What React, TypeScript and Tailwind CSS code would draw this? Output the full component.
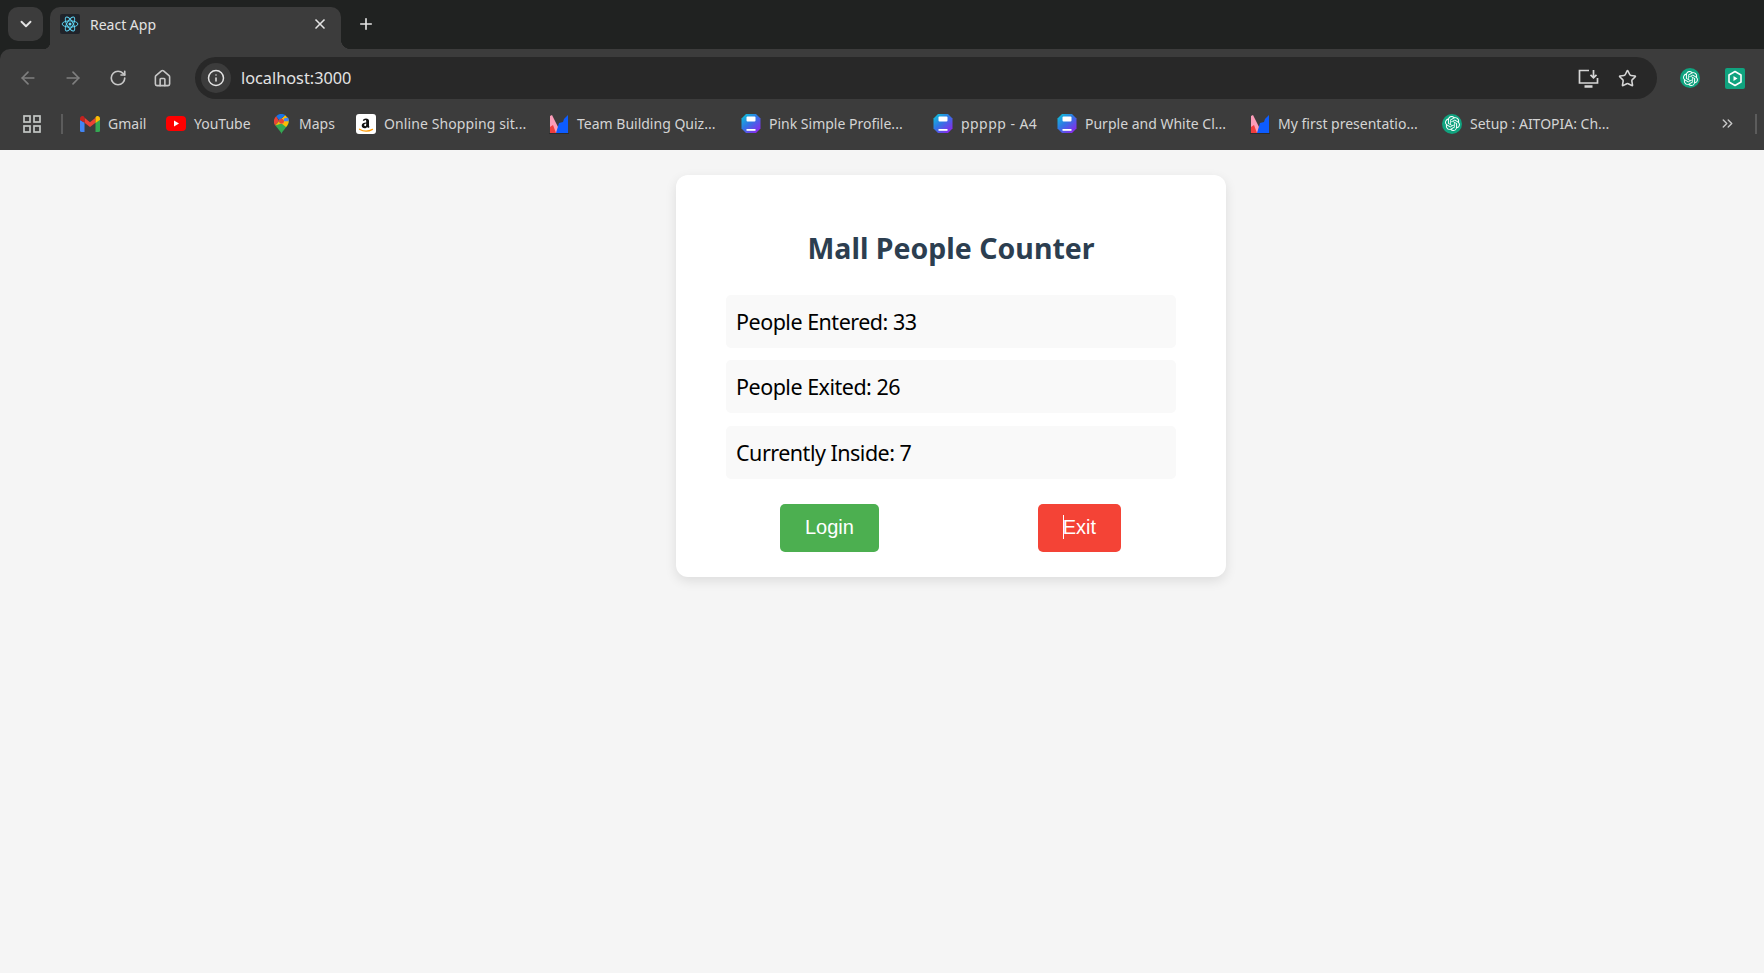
import { ArrowLeft, ArrowRight, ChevronDown, ChevronsRight, House, Info, Plus, RotateCw, Star, X } from "lucide-react";
import type { ReactNode } from "react";
import { SiOpenai } from "react-icons/si";

function ReactIcon() {
  return (
    <div className="flex h-5 w-5 items-center justify-center rounded-[2px] bg-[#20232a]">
      <svg width="18" height="18" viewBox="-12 -12 24 24" fill="none" stroke="#61dafb" strokeWidth="1.2">
        <circle r="2" fill="#61dafb" stroke="none" />
        <ellipse rx="10.5" ry="4.2" />
        <ellipse rx="10.5" ry="4.2" transform="rotate(60)" />
        <ellipse rx="10.5" ry="4.2" transform="rotate(120)" />
      </svg>
    </div>
  );
}

function GmailIcon() {
  return (
    <svg width="20" height="16" viewBox="0 0 20 16" fill="none">
      <path d="M0 4v10.5A1.5 1.5 0 0 0 1.5 16H4.500V6.500z" fill="#4285f4" />
      <path d="M15.500 6.500V16h3A1.500 1.500 0 0 0 20 14.500V4z" fill="#34a853" />
      <path d="M4.500 1.800 10 6.200l5.500-4.400v5L10 11 4.500 6.800z" fill="#ea4335" />
      <path d="M0 4V2.500C0 .6 2.200-.6 3.800.6l.7.6v5.600z" fill="#c5221f" />
      <path d="M15.500 1.200l.7-.6C17.800-.6 20 .6 20 2.500V4l-4.500 3z" fill="#fbbc04" />
    </svg>
  );
}

function YoutubeIcon() {
  return (
    <svg width="20" height="15" viewBox="0 0 20 15">
      <rect width="20" height="15" rx="4" fill="#ff0000" />
      <path d="M8 4.500v6l5-3z" fill="#fff" />
    </svg>
  );
}

function MapsIcon() {
  return (
    <svg width="15" height="20" viewBox="0 0 15 20">
      <path d="M7.500 20C6.800 16.500 0 12 0 7.300h15C15 12 8.200 16.500 7.500 20z" fill="#34a853" />
      <path d="M1.200 11.500 11 1 14.300 4.500C15.500 7.500 14 11 12 13L7.500 9.500z" fill="#fbbc04" />
      <path d="M11.500 1.200A7.500 7.500 0 0 0 2.200 2.300L5 6z" fill="#1a73e8" />
      <path d="M2.200 2.300A7.400 7.400 0 0 0 1.200 11.500L5 7z" fill="#ea4335" />
      <path d="M10 4.500 14 3.400A7.400 7.400 0 0 1 14.800 7.300H10z" fill="#4285f4" />
      <circle cx="7.500" cy="7.300" r="2.700" fill="#fff" fillOpacity="0.25" />
      <circle cx="7.500" cy="7.300" r="2.500" fill="#ea4335" />
    </svg>
  );
}

function AmazonIcon() {
  return (
    <svg width="20" height="20" viewBox="0 0 20 20" fill="none">
      <rect width="20" height="20" rx="3" fill="#fff" />
      <path d="M6.800 6.500c.3-1.300 1.500-2 3.200-2 2 0 3 .9 3 2.600v4.700c0 .5.200.8.600 1.100l-1.400 1.200c-.5-.4-.8-.8-1-1.200-.7.900-1.500 1.300-2.600 1.300-1.700 0-2.900-1-2.900-2.700 0-2.200 2-3 4.500-3.100V7.200c0-.8-.4-1.200-1-1.200-.5 0-.9.300-1 .9zm3.400 3.100c-1.400.1-2 .7-2 1.500 0 .7.400 1.100 1 1.100 .8 0 1-.8 1-2z" fill="#111" />
      <path d="M3.500 15.200c4 2.400 9 2.400 13 .2" stroke="#f90" strokeWidth="1.300" strokeLinecap="round" />
    </svg>
  );
}

function SlidesIcon() {
  return (
    <svg width="20" height="20" viewBox="0 0 20 20">
      <path d="M0 20h20v-.500H0z" fill="#1a1a1a" />
      <path d="M1 19V2l2-1 6 12v6z" fill="#fb9cb8" />
      <path d="M1 19v-6l3-2 3 8z" fill="#f03d3d" />
      <path d="M7 19l3-10 4-1 1-3 4-4v18z" fill="#0d5cff" />
    </svg>
  );
}

function GammaIcon() {
  return (
    <svg width="21" height="21" viewBox="0 0 20 20">
      <defs>
        <linearGradient id="gamma" x1="0" y1="0.100" x2="0.800" y2="1">
          <stop offset="0" stopColor="#0fc0d8" />
          <stop offset="0.450" stopColor="#2f78e4" />
          <stop offset="1" stopColor="#8a28ec" />
        </linearGradient>
      </defs>
      <path d="M5 .5h10L19.500 5v10L15 19.500H5L.5 15V5z" fill="url(#gamma)" />
      <rect x="5.500" y="3" width="9" height="5" rx="1" fill="#fff" />
      <rect x="5.500" y="15.500" width="9" height="1.800" fill="#fff" />
    </svg>
  );
}

function KnotIcon() {
  return (
    <div className="flex h-5 w-5 items-center justify-center rounded-full bg-[#10a37f]">
      <SiOpenai size={15} color="#fff" />
    </div>
  );
}

function HexPlayIcon() {
  return (
    <svg width="20" height="21" viewBox="0 0 20 21" fill="none">
      <rect width="20" height="21" rx="2" fill="#10a37f" />
      <path d="M10 3.500 16 7v7l-6 3.500L4 14V7z" stroke="#fff" strokeWidth="1.600" strokeLinejoin="round" />
      <path d="M8.500 8l4 2.500-4 2.500z" fill="#fff" />
    </svg>
  );
}

function InstallIcon() {
  return (
    <svg width="21" height="19" viewBox="0 0 21 19" fill="none" stroke="#d6d6d6" strokeWidth="1.700">
      <path d="M11 1.500H1.500v12.500h18V9" />
      <path d="M6.500 17.500h8" strokeWidth="2.500" />
      <path d="M15.500 1v7.500M12.500 5.800l3 3 3-3" />
    </svg>
  );
}

function AppsIcon() {
  return (
    <svg width="18" height="18" viewBox="0 0 18 18" fill="none" stroke="#c4c7c5" strokeWidth="1.700">
      <rect x="1" y="1" width="6" height="6" />
      <rect x="11" y="1" width="6" height="6" />
      <rect x="1" y="11" width="6" height="6" />
      <rect x="11" y="11" width="6" height="6" />
    </svg>
  );
}

const bookmarks: { label: string; icon: ReactNode; left: string; width: string; spacing?: string }[] = [
  { label: "Gmail", icon: <GmailIcon />, left: "ml-[17px]", width: "w-[65px]" },
  { label: "YouTube", icon: <YoutubeIcon />, left: "ml-[21px]", width: "w-[85px]" },
  { label: "Maps", icon: <MapsIcon />, left: "ml-[20px]", width: "w-[61px]" },
  { label: "Online Shopping sit...", icon: <AmazonIcon />, left: "ml-[24px]", width: "w-[170px]", spacing: "tracking-[0.1px]" },
  { label: "Team Building Quiz...", icon: <SlidesIcon />, left: "ml-[23px]", width: "w-[165px]" },
  { label: "Pink Simple Profile...", icon: <GammaIcon />, left: "ml-[27px]", width: "w-[163px]" },
  { label: "ppppp - A4", icon: <GammaIcon />, left: "ml-[29px]", width: "w-[103px]", spacing: "tracking-[0.45px]" },
  { label: "Purple and White Cl...", icon: <GammaIcon />, left: "ml-[21px]", width: "w-[170px]" },
  { label: "My first presentatio...", icon: <SlidesIcon />, left: "ml-[23px]", width: "w-[167px]" },
  { label: "Setup : AITOPIA: Ch...", icon: <KnotIcon />, left: "ml-[25px]", width: "w-[166px]" },
];

const row = "h-[53px] rounded-[5px] bg-[#f9f9f9] px-[10px] text-[21.5px] leading-[53px] tracking-[-0.5px] text-black";

export default function App() {
  return (
    <div className="flex h-[973px] flex-col overflow-hidden bg-[#f5f5f5] font-['Noto_Sans',sans-serif]">
      <div className="shrink-0 bg-[#202221]">
        {/* tab strip */}
        <div className="flex h-[49px] items-end pl-2">
          <div className="mb-[8px] flex h-[34px] w-[35px] items-center justify-center rounded-[10px] bg-[#3c3c3c]">
            <ChevronDown size={18} strokeWidth={2.5} className="text-[#e3e3e3]" />
          </div>
          <div className="h-[7px] w-[7px] bg-[radial-gradient(circle_at_0_0,#202221_7px,#3c3c3c_7.5px)]" />
          <div className="flex h-[42px] w-[291px] items-center rounded-t-[10px] bg-[#3c3c3c] pb-[8px] pl-[10px] pr-[13px]">
            <ReactIcon />
            <span className="ml-[10px] flex-1 text-[14px] text-[#e3e3e3]">React App</span>
            <X size={16} strokeWidth={2.5} className="text-[#e3e3e3]" />
          </div>
          <div className="h-[10px] w-[10px] bg-[radial-gradient(circle_at_100%_0,#202221_10px,#3c3c3c_10.5px)]" />
          <Plus size={18} strokeWidth={2.2} className="mb-[16px] ml-[6px] text-[#e3e3e3]" />
        </div>

        {/* toolbar */}
        <div className="flex h-[51px] items-center rounded-tl-[10px] bg-[#3c3c3c] pl-[18px] pt-[7px]">
          <ArrowLeft size={20} className="text-[#7f7f7f]" />
          <ArrowRight size={20} className="ml-[25px] text-[#7f7f7f]" />
          <RotateCw size={18} strokeWidth={2.2} className="ml-[26px] text-[#c7c7c7]" />
          <House size={19} className="ml-[26px] text-[#c7c7c7]" />
          <div className="ml-[23px] flex h-[42px] w-[1462px] items-center rounded-full bg-[#282828] pl-[6px] pr-[20px]">
            <div className="flex h-[30px] w-[30px] items-center justify-center rounded-full bg-[#3c3c3c]">
              <Info size={18} className="text-[#e3e3e3]" />
            </div>
            <span className="ml-[10px] flex-1 text-[16.3px] text-[#e3e3e3]">localhost:3000</span>
            <InstallIcon />
            <Star size={19} strokeWidth={2} className="ml-[19px] text-[#d6d6d6]" />
          </div>
          <div className="ml-[23px]">
            <KnotIcon />
          </div>
          <div className="ml-[25px]">
            <HexPlayIcon />
          </div>
        </div>
      </div>

      {/* bookmarks bar */}
      <div className="flex h-[50px] shrink-0 items-center bg-[#3c3c3c] pb-[3px] pl-[23px]">
        <AppsIcon />
        <div className="ml-[20px] h-5 w-[2px] bg-[#5c5c5c]" />
        {bookmarks.map((b, i) => (
          <div key={i} className={`flex shrink-0 items-center gap-2 ${b.left} ${b.width}`}>
            <div className="flex w-5 shrink-0 justify-center">{b.icon}</div>
            <span className={`whitespace-nowrap text-[14px] text-[#d4d4d4] ${b.spacing ?? ""}`}>{b.label}</span>
          </div>
        ))}
        <ChevronsRight size={17} className="ml-[111px] text-[#c7c7c7]" />
        <div className="ml-[19px] h-5 w-[2px] bg-[#5c5c5c]" />
      </div>

      {/* page */}
      <div className="flex flex-1 pl-[676px] pt-[25px]">
        <div className="h-[402px] w-[550px] rounded-[12px] bg-white px-[50px] pt-[54px] shadow-[0_4px_12px_rgba(0,0,0,0.1)]">
          <h1 className="text-center text-[28.5px] font-bold leading-[38px] text-[#2c3e50]">Mall People Counter</h1>
          <div className="mt-[28px] flex flex-col gap-[12px]">
            <div className={row}>People Entered: 33</div>
            <div className={row}>People Exited: 26</div>
            <div className={`${row} mt-px`}>Currently Inside: 7</div>
          </div>
          <div className="mt-[25px] flex justify-between pl-[54px] pr-[55px] font-['Liberation_Sans',sans-serif] text-[20px] text-white">
            <button className="h-[48px] rounded-[5px] bg-[#4caf50] px-[25px] pb-[3px]">Login</button>
            <button className="relative h-[48px] rounded-[5px] bg-[#f44336] px-[25px] pb-[3px]">
              Exit
              <span className="absolute left-[25px] top-[11px] h-[24px] w-px bg-white" />
            </button>
          </div>
        </div>
      </div>
    </div>
  );
}
